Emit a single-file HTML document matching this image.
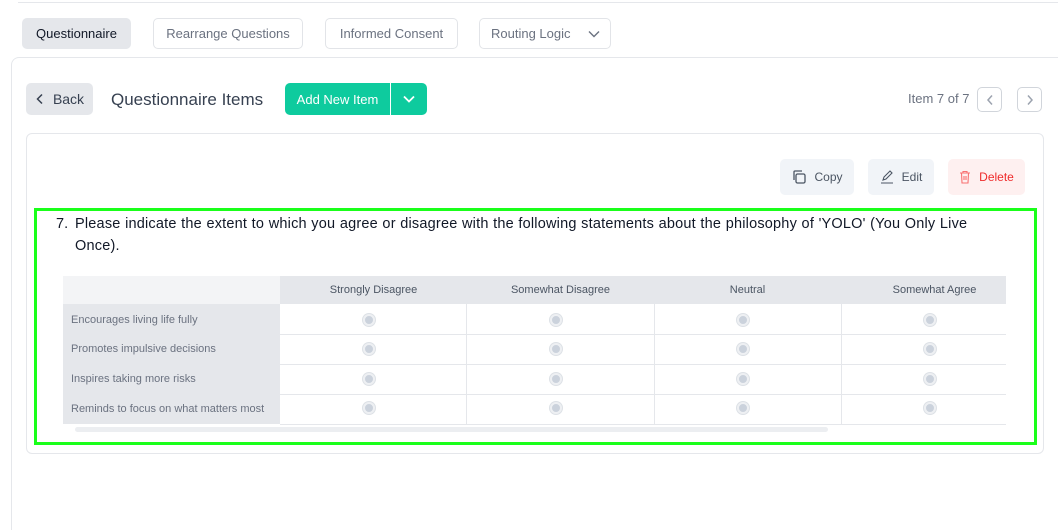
<!DOCTYPE html>
<html><head><meta charset="utf-8"><style>
*{box-sizing:border-box;margin:0;padding:0}
html,body{width:1058px;height:530px;overflow:hidden}
body{background:#fff;font-family:"Liberation Sans",sans-serif;position:relative;color:#374151}
.a{position:absolute}
.tab{position:absolute;top:18px;height:31px;border:1px solid #e2e4e8;border-radius:5px;font-size:13px;color:#6b7280;display:flex;align-items:center;justify-content:center}
.btn{position:absolute;border-radius:5px;display:flex;align-items:center;justify-content:center;font-size:12px}
.r{position:absolute;width:12px;height:12px;border-radius:50%;background:#cbd2dc;border:2px solid #eef0f3;box-shadow:0 0 0 1px #dde1e6}
.hd{position:absolute;top:276px;height:28px;font-size:11px;color:#4b5563;display:flex;align-items:center;justify-content:center}
.lb{position:absolute;left:71px;font-size:11px;color:#6b7280}
</style></head><body>
<div class="a" style="left:18px;top:2px;right:0;height:1px;background:#e5e7eb"></div>
<div class="tab" style="left:22px;width:109px;background:#e5e7eb;border-color:#e5e7eb;color:#111827">Questionnaire</div>
<div class="tab" style="left:153px;width:150px">Rearrange Questions</div>
<div class="tab" style="left:325px;width:133px">Informed Consent</div>
<div class="tab" style="left:479px;width:132px;justify-content:flex-start;padding-left:11px">Routing Logic
<svg class="a" style="left:108px;top:10px" width="12" height="10" viewBox="0 0 12 10"><path d="M1 2.5l5 5 5-5" fill="none" stroke="#6b7280" stroke-width="1.4"/></svg></div>
<div class="a" style="left:11px;top:57px;width:1047px;height:473px;border:1px solid #e5e7eb;border-right:none;border-bottom:none;border-radius:8px 0 0 0"></div>
<div class="btn" style="left:26px;top:83px;width:67px;height:32px;background:#e5e7eb;font-size:14px;color:#374151">
<svg width="10" height="12" viewBox="0 0 10 12" style="margin-right:8px"><path d="M7 1.5L2.5 6 7 10.5" fill="none" stroke="#374151" stroke-width="1.5"/></svg>Back</div>
<div class="a" style="left:111px;top:90px;font-size:17px;color:#374151">Questionnaire Items</div>
<div class="btn" style="left:285px;top:83px;width:105px;height:32px;background:#0ecb9e;color:#fff;font-size:13px;border-radius:5px 0 0 5px">Add New Item</div>
<div class="btn" style="left:391px;top:83px;width:36px;height:32px;background:#0ecb9e;border-radius:0 5px 5px 0">
<svg width="14" height="10" viewBox="0 0 14 10"><path d="M2 2.5l5 5 5-5" fill="none" stroke="#fff" stroke-width="1.8"/></svg></div>
<div class="a" style="left:908px;top:91px;font-size:13px;color:#6b7280">Item 7 of 7</div>
<div class="btn" style="left:977px;top:87px;width:25px;height:25px;border:1px solid #d1d5db">
<svg width="8" height="12" viewBox="0 0 8 12"><path d="M6 1.5L2 6l4 4.5" fill="none" stroke="#9ca3af" stroke-width="1.5"/></svg></div>
<div class="btn" style="left:1017px;top:87px;width:25px;height:25px;border:1px solid #d1d5db">
<svg width="8" height="12" viewBox="0 0 8 12"><path d="M2 1.5L6 6l-4 4.5" fill="none" stroke="#9ca3af" stroke-width="1.5"/></svg></div>
<div class="a" style="left:26px;top:133px;width:1018px;height:321px;border:1px solid #e5e7eb;border-radius:6px"></div>
<div class="btn" style="left:780px;top:159px;width:74px;height:36px;background:#f1f4f8;color:#4b5563">
<svg width="16" height="16" viewBox="0 0 16 16" style="margin-right:7px"><rect x="5" y="5" width="9" height="9" rx="1.5" fill="none" stroke="#4b5563" stroke-width="1.3"/><path d="M3 11V3a1 1 0 0 1 1-1h7" fill="none" stroke="#4b5563" stroke-width="1.3"/></svg>Copy</div>
<div class="btn" style="left:868px;top:159px;width:66px;height:36px;background:#f1f4f8;color:#4b5563">
<svg width="14" height="14" viewBox="0 0 14 14" style="margin-right:8px"><path d="M3 10l1-3 6-6 2 2-6 6zM1 13h12" fill="none" stroke="#4b5563" stroke-width="1.1"/></svg>Edit</div>
<div class="btn" style="left:948px;top:159px;width:77px;height:36px;background:#fef0f0;color:#ef2b2b">
<svg width="12" height="14" viewBox="0 0 12 14" style="margin-right:8px"><path d="M1 3h10M4 3V1.5h4V3M2.5 3l.5 10h6l.5-10M5 6v4M7 6v4" fill="none" stroke="#f87171" stroke-width="1.1"/></svg>Delete</div>
<div class="a" style="left:34px;top:208px;width:1003px;height:237px;border:3px solid #1aff1a"></div>
<div class="a" style="left:56px;top:213px;font-size:14.5px;line-height:22px;color:#111827">7.</div>
<div class="a" style="left:75px;top:213px;width:920px;font-size:14.5px;line-height:22px;color:#111827;letter-spacing:0.2px;word-spacing:0.3px">Please indicate the extent to which you agree or disagree with the following statements about the philosophy of 'YOLO' (You Only Live<br>Once).</div>
<div class="a" style="left:63px;top:276px;width:943px;height:148px;background:#fff;border-top:1px solid #e5e7eb"></div>
<div class="a" style="left:63px;top:276px;width:217px;height:28px;background:#f3f4f6"></div>
<div class="a" style="left:280px;top:276px;width:726px;height:28px;background:#e5e7eb"></div>
<div class="a" style="left:63px;top:304px;width:217px;height:120px;background:#e5e7eb"></div>
<div class="hd" style="left:280px;width:187px">Strongly Disagree</div>
<div class="hd" style="left:467px;width:187px">Somewhat Disagree</div>
<div class="hd" style="left:654px;width:187px">Neutral</div>
<div class="hd" style="left:841px;width:187px">Somewhat Agree</div>
<div class="lb" style="top:314px">Encourages living life fully</div>
<div class="lb" style="top:343px">Promotes impulsive decisions</div>
<div class="lb" style="top:373px">Inspires taking more risks</div>
<div class="lb" style="top:403px">Reminds to focus on what matters most</div>
<div class="a" style="left:280px;top:334px;width:726px;height:1px;background:#e5e7eb"></div>
<div class="a" style="left:280px;top:364px;width:726px;height:1px;background:#e5e7eb"></div>
<div class="a" style="left:280px;top:394px;width:726px;height:1px;background:#e5e7eb"></div>
<div class="a" style="left:280px;top:424px;width:726px;height:1px;background:#e5e7eb"></div>
<div class="a" style="left:466px;top:304px;width:1px;height:120px;background:#e5e7eb"></div>
<div class="a" style="left:654px;top:304px;width:1px;height:120px;background:#e5e7eb"></div>
<div class="a" style="left:841px;top:304px;width:1px;height:120px;background:#e5e7eb"></div>
<div class="a" style="left:75px;top:427px;width:753px;height:5px;border-radius:3px;background:#eceef1"></div>
<div class="r" style="left:363px;top:314px"></div><div class="r" style="left:550px;top:314px"></div><div class="r" style="left:737px;top:314px"></div><div class="r" style="left:924px;top:314px"></div>
<div class="r" style="left:363px;top:343px"></div><div class="r" style="left:550px;top:343px"></div><div class="r" style="left:737px;top:343px"></div><div class="r" style="left:924px;top:343px"></div>
<div class="r" style="left:363px;top:373px"></div><div class="r" style="left:550px;top:373px"></div><div class="r" style="left:737px;top:373px"></div><div class="r" style="left:924px;top:373px"></div>
<div class="r" style="left:363px;top:402px"></div><div class="r" style="left:550px;top:402px"></div><div class="r" style="left:737px;top:402px"></div><div class="r" style="left:924px;top:402px"></div>
</body></html>
